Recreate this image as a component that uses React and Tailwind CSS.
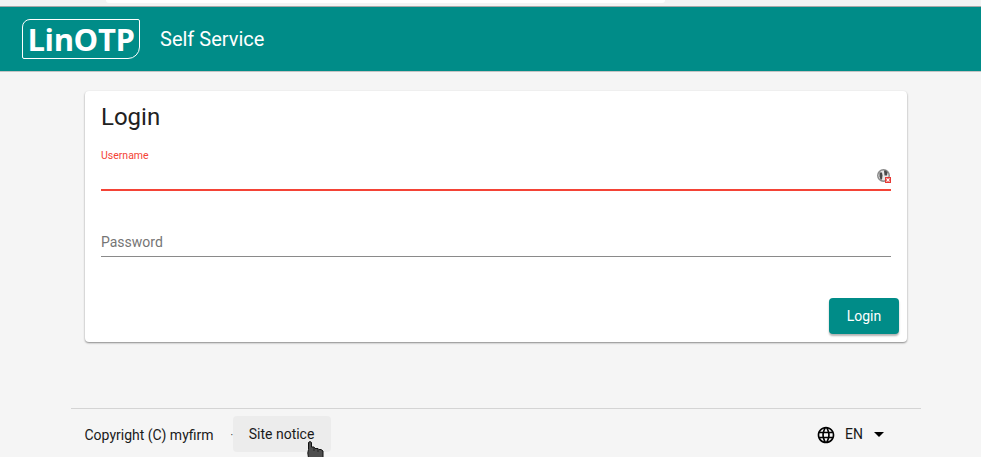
import React from "react";

const font = { fontFamily: "Roboto, sans-serif" };

function Logo() {
  return (
    <div className="w-[118px] h-[40px] border border-white rounded-tl-[8px] rounded-br-[12px] rounded-tr-[2px] rounded-bl-[2px] flex items-center justify-center text-white font-bold text-[31px] leading-none tracking-[-0.4px] font-['Open_Sans',sans-serif]">
      LinOTP
    </div>
  );
}

function Globe() {
  return (
    <svg width="20" height="20" viewBox="0 0 24 24" fill="#000">
      <path d="M11.99 2C6.47 2 2 6.48 2 12s4.47 10 9.99 10C17.52 22 22 17.52 22 12S17.52 2 11.99 2zm6.93 6h-2.95c-.32-1.25-.78-2.45-1.38-3.56 1.84.63 3.37 1.91 4.33 3.56zM12 4.040c.83 1.2 1.48 2.53 1.91 3.96h-3.82c.43-1.43 1.08-2.76 1.91-3.96zM4.260 14C4.100 13.360 4 12.690 4 12s.1-1.360.26-2h3.380c-.08.66-.14 1.320-.14 2 0 .68.06 1.340.14 2H4.260zm.82 2h2.950c.32 1.250.78 2.450 1.380 3.560-1.840-.63-3.370-1.900-4.330-3.560zm2.950-8H5.080c.96-1.660 2.490-2.930 4.330-3.560C8.810 5.550 8.350 6.750 8.030 8zM12 19.960c-.83-1.200-1.480-2.530-1.910-3.960h3.820c-.43 1.430-1.080 2.760-1.910 3.960zM14.340 14H9.660c-.09-.66-.16-1.320-.16-2 0-.68.07-1.350.16-2h4.680c.09.650.16 1.320.16 2 0 .68-.07 1.340-.16 2zm.25 5.560c.6-1.110 1.060-2.310 1.380-3.560h2.950c-.96 1.650-2.490 2.930-4.330 3.560zM16.360 14c.08-.66.14-1.320.14-2 0-.68-.06-1.340-.14-2h3.380c.16.640.26 1.310.26 2s-.1 1.360-.26 2h-3.380z" />
    </svg>
  );
}

function KeyIcon() {
  return (
    <svg width="14" height="14" viewBox="0 0 14 14" className="absolute right-0 top-[25px]">
      <circle cx="6.500" cy="6.500" r="6.500" fill="#8a8a8a" />
      <circle cx="6.500" cy="6.500" r="5" fill="#e8e8e8" />
      <path d="M2.500 3.500h2.500l.5 3-.5 4h-1.500l-1-3z" fill="#4a4a4a" />
      <path d="M7 1.500h2l1.500 2-.5 3H7.500z" fill="#4a4a4a" />
      <rect x="8" y="8" width="6" height="6" fill="#e53935" />
      <path d="M9.500 9.300l3 3.400m0-3.400l-3 3.400" stroke="#fff" strokeWidth="1.200" />
    </svg>
  );
}

function Cursor() {
  return (
    <svg width="17" height="17" viewBox="0 0 17 17" className="absolute left-[74px] top-[25px]">
      <path d="M1.500 1.500c0-1 3-1 3 0V6h2.500l1 1.500H11l1 1H14l2 1.500v7H1.500L.8 12 1.500 8.500z" fill="#4e4e4e" stroke="#111" strokeWidth="1" />
      <path d="M7 7v3M11 8v3" stroke="#222" strokeWidth="1" />
    </svg>
  );
}

export default function App() {
  return (
    <div className="w-[981px] h-[457px] overflow-hidden bg-[#f5f5f5] flex flex-col text-black" style={font}>
      <div className="h-[6px] shrink-0 bg-[#f3f3f3] pl-[106px] pr-[316px]">
        <div className="h-[3px] bg-white rounded-b-[6px]" />
      </div>
      <header className="h-[66px] shrink-0 bg-[#008c88] border-t border-[#a8a8a8] border-b-[#c4c4c4] border-b flex items-center pl-[22px] gap-[20px]">
        <Logo />
        <span className="text-white text-[20px] leading-none">Self Service</span>
      </header>
      <main className="flex-1 flex flex-col pl-[71px] pr-[60px]">
        <div className="mx-[14px] mt-[19px] h-[251px] bg-white rounded-[4px] shadow-[0_1px_2px_rgba(0,0,0,0.45)] pt-[12px] px-[16px] flex flex-col">
          <h1 className="text-[24px] leading-[28px] text-[#212121]">Login</h1>
          <div className="relative mt-[13px] h-[47px] border-b-2 border-[#f44336]">
            <label className="absolute left-0 top-[6px] text-[10.500px] leading-[12px] text-[#f44336]">Username</label>
            <KeyIcon />
          </div>
          <div className="mt-[43px] h-[23px] border-b border-[#8a8a8a] text-[14px] leading-[16px] text-[#757575]">Password</div>
          <div className="flex justify-end mt-[41px] -mr-[8px]">
            <button className="w-[70px] h-[36px] rounded-[4px] bg-[#008c88] text-white text-[14px] shadow-[0_2px_2px_rgba(0,0,0,0.3)]">Login</button>
          </div>
        </div>
        <footer className="mt-[66px] border-t border-[#d4d4d4] h-[49px] pt-[7px] flex items-start pl-[13.500px] pr-[37px] text-[14px] text-[#1a1a1a]">
          <span className="mt-[9px]">Copyright (C) myfirm</span>
          <span className="ml-[17px] mt-[15px] w-[2px] text-[10px] leading-none">·</span>
          <div className="relative">
            <button className="w-[98px] h-[36px] rounded-[4px] bg-[#ececec] text-center">Site notice</button>
            <Cursor />
          </div>
          <div className="ml-auto mt-[8px] flex items-center">
            <Globe />
            <span className="ml-[9px]">EN</span>
            <svg width="10" height="5" viewBox="0 0 10 5" className="ml-[11px]"><path d="M0 0h10L5 5z" fill="#000" /></svg>
          </div>
        </footer>
      </main>
    </div>
  );
}
